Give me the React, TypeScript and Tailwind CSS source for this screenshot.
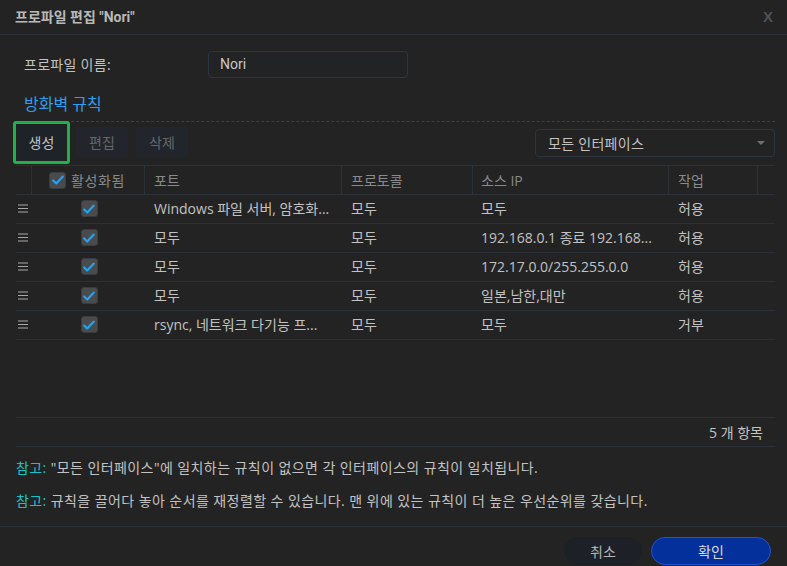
import React from "react";

type Rule = {
    port: string;
    protocol: string;
    source: string;
    action: string;
};

// texts as the dialog shows them (long ones are cut by the grid itself)
const rules: Rule[] = [
    { port: "Windows 파일 서버, 암호화...", protocol: "모두", source: "모두", action: "허용" },
    { port: "모두", protocol: "모두", source: "192.168.0.1 종료 192.168...", action: "허용" },
    { port: "모두", protocol: "모두", source: "172.17.0.0/255.255.0.0", action: "허용" },
    { port: "모두", protocol: "모두", source: "일본,남한,대만", action: "허용" },
    { port: "rsync, 네트워크 다기능 프...", protocol: "모두", source: "모두", action: "거부" },
];

const Check = () => (
    <span className="flex h-[17px] w-[17px] shrink-0 items-center justify-center rounded-[3px] border border-[#3a3d40] bg-[#4a4b4d]">
        <svg viewBox="0 0 16 16" className="h-[14px] w-[14px]" fill="none" stroke="#23a3f2" strokeWidth={2.4} strokeLinecap="round" strokeLinejoin="round">
            <path d="M2.5 8.5 6 12 13.5 4" />
        </svg>
    </span>
);

const Grip = () => (
    <svg viewBox="0 0 10 9" className="h-[9px] w-[10px]" stroke="#a9a9a9" strokeWidth={1.2}>
        <path d="M0 1h10M0 4.5h10M0 8h10" />
    </svg>
);

export default function App() {
    return (
        <div className="flex h-[566px] w-[787px] flex-col overflow-hidden bg-[#232323] font-['Open_Sans','Noto_Sans_CJK_KR',sans-serif] text-[14px] text-[#c2c2c2]">
            {/* title */}
            <div className="flex h-[35px] shrink-0 items-center justify-between border-b border-[#2a323b] pl-[15px] pr-[14px]">
                <span className="font-['Roboto','Noto_Sans_CJK_KR',sans-serif] text-[14px] font-bold text-[#b9b9b9]">프로파일 편집 "Nori"</span>
                <span className="font-['Liberation_Sans',sans-serif] text-[15px] font-bold text-[#4d5157]">X</span>
            </div>

            <div className="flex flex-1 flex-col pl-[16px] pr-[12px]">
                {/* profile name */}
                <div className="mt-[16px] flex items-center">
                    <span className="w-[192px] pl-[8px] leading-[20px] tracking-[0.02em]">프로파일 이름:</span>
                    <div className="flex h-[27px] w-[200px] items-center rounded-[4px] border border-[#2c3640] bg-[#222324] pl-[11px] font-['Roboto',sans-serif] text-[#c8c8c8]">
                        Nori
                    </div>
                </div>

                {/* section heading */}
                <div className="mt-[15px] flex h-[29px] items-start border-b border-dashed border-[#3a4048] pl-[8px]">
                    <span className="text-[16px] leading-[22px] text-[#2c9ff0]">방화벽 규칙</span>
                </div>

                {/* toolbar */}
                <div className="-mt-[1px] flex h-[44px] items-start justify-between">
                    <div className="-ml-[3px] flex items-center">
                        <div className="box-border h-[43px] w-[57px] rounded-[3px] border-[3px] border-[#1fb24a] p-[1px]">
                            <button className="flex h-full w-full items-center justify-center bg-[#1e2229] text-[#c2c2c2]">생성</button>
                        </div>
                        <button className="ml-[6px] flex h-[31px] w-[52px] items-center justify-center rounded-[4px] bg-[#22262c] text-[#63666a]">편집</button>
                        <button className="ml-[8px] flex h-[31px] w-[52px] items-center justify-center rounded-[4px] bg-[#22262c] text-[#63666a]">삭제</button>
                    </div>
                    <div className="mt-[8px] flex h-[28px] w-[240px] items-center justify-between rounded-[4px] border border-[#2c3640] pl-[12px] pr-[9px]">
                        <span className="tracking-[0.02em]">모든 인터페이스</span>
                        <svg viewBox="0 0 8 4" className="h-[4px] w-[8px]" fill="#6b6f74">
                            <path d="M0 0h8L4 4z" />
                        </svg>
                    </div>
                </div>

                {/* table */}
                <div className="flex h-[253px] flex-col border-y border-[#2b3138]">
                    <div className="flex h-[29px] shrink-0 items-center border-b border-[#2b3138] text-[#878a8d]">
                        <div className="h-full w-[16px] border-r border-[#2b3138]" />
                        <div className="flex h-full w-[113px] items-center justify-center gap-[5px] border-r border-[#2b3138] pr-[2px]">
                            <Check />
                            <span className="tracking-[0.04em]">활성화됨</span>
                        </div>
                        <div className="flex h-full w-[197px] items-center border-r border-[#2b3138] pl-[9px]">포트</div>
                        <div className="flex h-full w-[131px] items-center border-r border-[#2b3138] pl-[9px]">프로토콜</div>
                        <div className="flex h-full w-[196px] items-center border-r border-[#2b3138] pl-[8px]">소스 IP</div>
                        <div className="flex h-full w-[89px] items-center border-r border-[#2b3138] pl-[9px]">작업</div>
                        <div className="flex-1" />
                    </div>
                    {rules.map((rule, i) => (
                        <div key={i} className="flex h-[29px] shrink-0 items-center border-b border-[#2b3138] pb-[1px]">
                            <div className="flex w-[16px] justify-center pr-[2px]">
                                <Grip />
                            </div>
                            <div className="flex w-[113px] justify-center pl-[1px]">
                                <Check />
                            </div>
                            <div className="w-[197px] whitespace-nowrap pl-[9px]">{rule.port}</div>
                            <div className="w-[131px] pl-[9px]">{rule.protocol}</div>
                            <div className="w-[196px] whitespace-nowrap pl-[8px]">{rule.source}</div>
                            <div className="w-[89px] pl-[9px]">{rule.action}</div>
                        </div>
                    ))}
                </div>

                {/* pager */}
                <div className="flex h-[29px] items-center justify-end border-b border-[#2b3138] pr-[12px]">
                    5 개 항목
                </div>

                {/* notes */}
                <p className="mt-[11px] leading-[20px] tracking-[0.03em]">
                    <span className="text-[#17c2c6]">참고:</span> "모든 인터페이스"에 일치하는 규칙이 없으면 각 인터페이스의 규칙이 일치됩니다.
                </p>
                <p className="mt-[13px] leading-[20px] tracking-[0.03em]">
                    <span className="text-[#17c2c6]">참고:</span> 규칙을 끌어다 놓아 순서를 재정렬할 수 있습니다. 맨 위에 있는 규칙이 더 높은 우선순위를 갖습니다.
                </p>
            </div>

            {/* footer */}
            <div className="flex h-[40px] shrink-0 items-start justify-end gap-[9px] border-t border-[#2b3138] pr-[16px] pt-[10px]">
                <button className="flex h-[28px] w-[78px] items-center justify-center rounded-full bg-[#1d2127] text-[#b5b5b5]">취소</button>
                <button className="flex h-[28px] w-[120px] items-center justify-center rounded-full border border-[#1c55d2] bg-[#03309a] text-[#dcdcdc]">확인</button>
            </div>
        </div>
    );
}
